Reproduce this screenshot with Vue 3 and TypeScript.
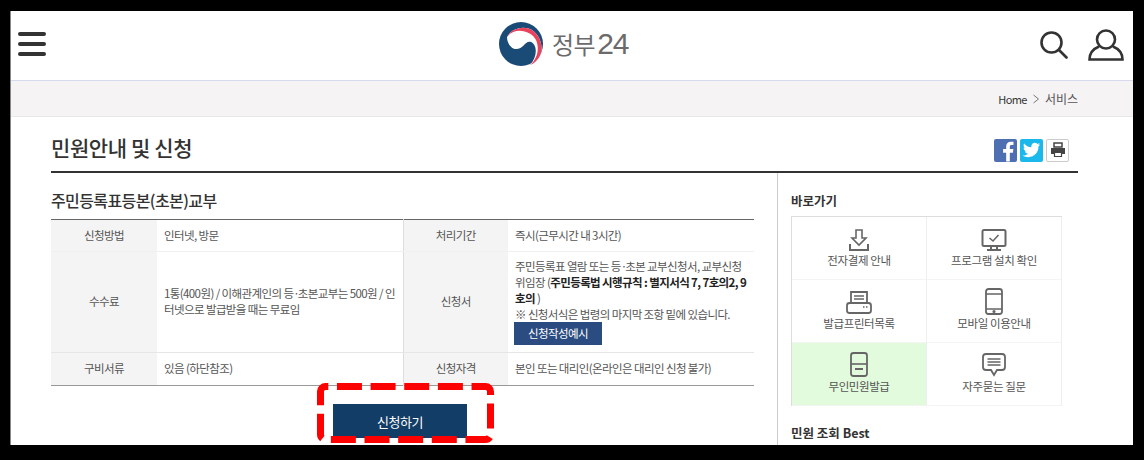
<script setup lang="ts">
interface Row { h1: string; d1: string; h2: string; d2?: string }
const shortcuts = [
  { key: 'down', label: '전자결제 안내', on: false },
  { key: 'monitor', label: '프로그램 설치 확인', on: false },
  { key: 'printer', label: '발급프린터목록', on: false },
  { key: 'phone', label: '모바일 이용안내', on: false },
  { key: 'kiosk', label: '무인민원발급', on: true },
  { key: 'chat', label: '자주묻는 질문', on: false },
]
const first: Row = { h1: '신청방법', d1: '인터넷, 방문', h2: '처리기간', d2: '즉시(근무시간 내 3시간)' }
const last: Row = { h1: '구비서류', d1: '있음 (하단참조)', h2: '신청자격', d2: '본인 또는 대리인(온라인은 대리인 신청 불가)' }
</script>

<template>
  <div class="frame">
    <div class="page">
      <header class="top">
        <div class="burger"><i></i><i></i><i></i></div>
        <div class="logo">
          <svg width="44" height="44" viewBox="0 0 44 44">
            <circle cx="22" cy="22" r="22" fill="#1a4a76" />
            <path d="M8 15C12 7 24 3 33 8C41 13 44 24 42 31C40 37 36 41 31 43C38 36 39 23 32 20C26 18 25 27 17 27C12 27 8 21 8 15Z" fill="#fff" />
            <path d="M8 15C12 7 24 3 33 8C41 13 44 24 42 31C40 37 36 41 31 43C38 37 41 27 37 18C32 8 15 5 8 15Z" fill="#e8425c" />
          </svg>
          <span class="brand"><span class="ko">정부</span>24</span>
        </div>
        <div class="tools">
          <svg width="28" height="28" viewBox="0 0 28 28" fill="none" stroke="#333" stroke-width="2.600">
            <circle cx="11.500" cy="11.500" r="10" />
            <path d="M19 19L26.500 26.500" stroke-linecap="round" />
          </svg>
          <svg width="36" height="32" viewBox="0 0 36 32" fill="none" stroke="#333" stroke-width="2.600">
            <circle cx="18" cy="10.500" r="9" />
            <path d="M11 17.500C5 20 1.500 24 1.500 30.500H34.500C34.500 24 31 20 25 17.500" />
          </svg>
        </div>
      </header>

      <nav class="crumb">
        <span class="home">Home</span>
        <svg width="6" height="10" viewBox="0 0 6 10" fill="none" stroke="#777" stroke-width="1"><path d="M0.500 1L5.500 5L0.500 9" /></svg>
        <span class="cur">서비스</span>
      </nav>

      <main class="main">
        <div class="head">
          <h1>민원안내 및 신청</h1>
          <div class="share">
            <span class="sq fb">
              <svg width="24" height="24" viewBox="0 0 24 24"><path d="M16.500 24V14.800H19.700L20.200 11H16.500V8.800C16.500 7.600 16.900 6.900 18.400 6.900H20.300V3.500C19.800 3.400 18.800 3.300 17.500 3.300C14.700 3.300 12.700 5 12.700 8.200V11H9.500V14.800H12.700V24Z" fill="#fff" /></svg>
            </span>
            <span class="sq tw">
              <svg width="24" height="24" viewBox="0 0 24 24"><path d="M21 6.200C20.300 6.500 19.600 6.700 18.900 6.800C19.700 6.300 20.200 5.600 20.500 4.800C19.800 5.200 19 5.500 18.200 5.700C17.500 4.900 16.500 4.500 15.500 4.500C13.400 4.500 11.800 6.200 11.800 8.200C11.800 8.500 11.800 8.800 11.900 9C8.800 8.900 6.100 7.400 4.300 5.100C4 5.700 3.800 6.300 3.800 7C3.800 8.300 4.400 9.400 5.400 10.100C4.800 10.100 4.200 9.900 3.700 9.600C3.700 11.500 5 13 6.700 13.300C6.100 13.500 5.600 13.500 5 13.400C5.500 14.900 6.900 16 8.500 16C6.700 17.400 4.800 18 2.700 17.800C4.400 18.900 6.400 19.500 8.500 19.500C15.600 19.500 19.300 13.700 19.300 8.700V8.200C20 7.700 20.600 7 21 6.200Z" fill="#fff" /></svg>
            </span>
            <span class="sq pr">
              <svg width="16" height="16" viewBox="0 0 16 16"><path d="M4 1H12V5H4Z" fill="none" stroke="#444" stroke-width="1.500" /><path d="M1 6H15V12H12V10H4V12H1Z" fill="#444" /><path d="M4.500 10.500H11.500V14.500H4.500Z" fill="none" stroke="#444" stroke-width="1.200" /></svg>
            </span>
          </div>
        </div>

        <div class="body">
          <section class="left">
            <h2>주민등록표등본(초본)교부</h2>
            <table class="info">
              <colgroup>
                <col class="c1" /><col class="c2" /><col class="c3" /><col class="c4" />
              </colgroup>
              <tbody>
                <tr class="r1">
                  <th>{{ first.h1 }}</th><td>{{ first.d1 }}</td>
                  <th class="mid">{{ first.h2 }}</th><td>{{ first.d2 }}</td>
                </tr>
                <tr class="r2">
                  <th>수수료</th>
                  <td>1통(400원) / 이해관계인의 등<span class="dot">·</span>초본교부는 500원 / 인터넷으로 발급받을 때는 무료임</td>
                  <th class="mid">신청서</th>
                  <td class="form">
                    주민등록표 열람 또는 등<span class="dot">·</span>초본 교부신청서, 교부신청 위임장 (<b>주민등록법 시행규칙 : 별지서식 7, 7호의2, 9호의</b> )<br />
                    ※ 신청서식은 법령의 마지막 조항 밑에 있습니다.
                    <span class="sample">신청작성예시</span>
                  </td>
                </tr>
                <tr class="r3">
                  <th>{{ last.h1 }}</th><td>{{ last.d1 }}</td>
                  <th class="mid">{{ last.h2 }}</th><td>{{ last.d2 }}</td>
                </tr>
              </tbody>
            </table>
            <div class="apply"><button type="button">신청하기</button></div>
          </section>

          <aside class="side">
            <h3>바로가기</h3>
            <div class="grid">
              <div v-for="s in shortcuts" :key="s.key" class="cell" :class="{ on: s.on }">
                <svg width="28" height="28" viewBox="0 0 28 28" fill="none" stroke="#666" stroke-width="1.600">
                  <template v-if="s.key === 'down'">
                    <path d="M11 5H17V13H21L14 20L7 13H11Z" />
                    <path d="M5 19V25H23V19" stroke-width="2" />
                  </template>
                  <template v-else-if="s.key === 'monitor'">
                    <rect x="2.500" y="5" width="23" height="16" rx="1.500" stroke-width="2" />
                    <path d="M9.500 13L13 16L18.500 10" />
                    <path d="M11 21V24M17 21V24M7 25H21" stroke-width="2" />
                  </template>
                  <template v-else-if="s.key === 'printer'">
                    <path d="M6 15V4H22V15" stroke-width="1.800" />
                    <path d="M9 8H19M9 11H19" />
                    <rect x="2" y="15" width="24" height="10" rx="2.500" stroke-width="1.800" />
                    <path d="M18 19H19.500M21 19H22.500" />
                  </template>
                  <template v-else-if="s.key === 'phone'">
                    <rect x="6" y="1" width="16" height="25" rx="2.500" stroke-width="1.800" />
                    <path d="M6 6H22M6 21H22" />
                    <circle cx="14" cy="23.500" r="0.800" />
                  </template>
                  <template v-else-if="s.key === 'kiosk'">
                    <rect x="6" y="2" width="16" height="23" rx="2.500" stroke-width="1.800" />
                    <path d="M6 13H22" />
                    <path d="M10 18H18" stroke-width="2" />
                  </template>
                  <template v-else>
                    <path d="M6 3H22A3 3 0 0 1 25 6V16A3 3 0 0 1 22 19H17L14 24L11 19H6A3 3 0 0 1 3 16V6A3 3 0 0 1 6 3Z" stroke-width="1.800" />
                    <path d="M7.500 8H20.500M7.500 11H20.500M7.500 14H20.500" />
                  </template>
                </svg>
                <span>{{ s.label }}</span>
              </div>
            </div>
            <h3 class="best">민원 조회 Best</h3>
          </aside>
        </div>
      </main>

      <svg class="mark" width="180" height="62" viewBox="0 0 180 62" fill="none">
        <rect x="3.500" y="3.500" width="170" height="53" rx="5" stroke="#f00" stroke-width="7" stroke-dasharray="25 8.650" stroke-dashoffset="22.200" />
      </svg>
    </div>
  </div>
</template>

<style>
html, body { margin: 0; background: #000; }
</style>

<style scoped>
.frame {
  width: 1144px;
  height: 460px;
  box-sizing: border-box;
  padding: 11px 11px 15px 10px;
  background: #000;
  font-family: "Noto Sans CJK KR", "Noto Sans", sans-serif;
  color: #444;
  overflow: hidden;
}
.page {
  position: relative;
  height: 434px;
  box-sizing: border-box;
  background: #fff;
  border-left: 1px solid #888;
  overflow: hidden;
}
.top {
  height: 70px;
  display: flex;
  align-items: center;
  justify-content: space-between;
  position: relative;
  box-sizing: border-box;
  border-bottom: 1px solid #d5daee;
  padding: 0 9px 3px 7px;
}
.burger { display: flex; flex-direction: column; gap: 6px; width: 28px; }
.burger i { display: block; height: 4px; border-radius: 2px; background: #333; }
.logo {
  position: absolute;
  left: 488px;
  top: 11px;
  display: flex;
  align-items: center;
  gap: 9px;
}
.brand { font-family: "Liberation Sans", sans-serif; font-size: 30px; line-height: 44px; letter-spacing: -1px; color: #6b6b6b; }
.ko { font-family: "Noto Sans CJK KR", sans-serif; font-size: 24px; letter-spacing: -0.500px; margin-right: 2px; }
.tools { display: flex; align-items: center; gap: 20px; margin-top: 1px; }
.crumb {
  height: 36px;
  box-sizing: border-box;
  background: #f5f3f4;
  border-bottom: 1px solid #e8e8e8;
  display: flex;
  align-items: center;
  justify-content: flex-end;
  padding-right: 55px;
  gap: 6px;
  font-size: 12px;
}
.home { color: #333; font-size: 11px; letter-spacing: -0.600px; }
.cur { color: #555; }
.main { padding: 0 55px 0 40px; }
.head {
  height: 56px;
  box-sizing: border-box;
  border-bottom: 2px solid #333;
  display: flex;
  align-items: center;
  justify-content: space-between;
  padding: 12px 9px 0 0;
}
h1 { margin: 0; padding-bottom: 6px; font-size: 21px; font-weight: 500; color: #333; letter-spacing: -0.400px; line-height: 30px; }
.share { display: flex; gap: 3px; }
.sq { width: 23px; height: 23px; border-radius: 2px; display: flex; align-items: center; justify-content: center; overflow: hidden; box-sizing: border-box; }
.fb { background: #4f6fb3; }
.tw { background: #1bb8ec; }
.pr { background: #fff; border: 1px solid #ccc; }
.body { display: flex; }
.left {
  width: 727px;
  height: 272px;
  box-sizing: border-box;
  border-right: 1px solid #ccc;
  padding-right: 23px;
}
h2 {
  margin: 0;
  padding-top: 15px;
  height: 46px;
  box-sizing: border-box;
  font-size: 16px;
  font-weight: 500;
  color: #333;
  line-height: 24px;
  letter-spacing: -0.600px;
}
.info {
  width: 703px;
  table-layout: fixed;
  border-collapse: collapse;
  border-top: 1px solid #666;
  border-bottom: 1px solid #999;
  font-size: 11.500px;
  line-height: 16px;
  letter-spacing: -0.600px;
}
.c1 { width: 106px; }
.c2 { width: 246px; }
.c3 { width: 105px; }
.c4 { width: 246px; }
th { background: #f4f4f4; font-weight: 400; color: #555; text-align: center; padding: 0 0 2px; }
td { padding: 0 7px 2px; color: #555; vertical-align: middle; }
td.form { padding-bottom: 0; }
.dot { letter-spacing: -2px; }
.mid { border-left: 1px solid #ddd; }
.r1 { height: 32px; }
.r2 { height: 101px; }
.r3 { height: 33px; }
.r1 th, .r1 td { border-bottom: 1px solid #f0f0f0; }
.r2 th, .r2 td { border-bottom: 1px solid #e6e6e6; }
.form b { color: #222; font-weight: 700; }
.sample {
  display: block;
  width: 88px;
  height: 23px;
  line-height: 23px;
  margin: 0 0 1px -1px;
  background: #2a4c80;
  color: #fff;
  text-align: center;
}
.apply { display: flex; justify-content: center; padding-top: 18px; }
button {
  width: 134px;
  height: 34px;
  border: 0;
  background: #123d66;
  color: #fff;
  font: inherit;
  font-size: 13px;
  letter-spacing: -0.500px;
  margin-right: 5px;
}
.side { padding: 17px 0 0 13px; width: 271px; }
h3 { margin: 0; font-size: 12.500px; font-weight: 700; color: #333; line-height: 22px; }
.grid {
  margin-top: 4px;
  width: 271px;
  display: grid;
  grid-template-columns: 135px 135px;
  grid-auto-rows: 63px;
  box-sizing: border-box;
  border-top: 1px solid #ddd;
  border-left: 1px solid #ddd;
}
.cell {
  display: flex;
  flex-direction: column;
  align-items: center;
  padding-top: 8px;
  box-sizing: border-box;
  border-right: 1px solid #eee;
  border-bottom: 1px solid #f4f4f4;
  font-size: 11.500px;
  letter-spacing: -0.400px;
  line-height: 16px;
  color: #555;
}
.cell svg { display: block; margin-bottom: -1px; }
.cell.on { background: #e2fbdc; }
.best { margin-top: 16px; }
.mark { position: absolute; left: 306px; top: 372px; }
</style>
